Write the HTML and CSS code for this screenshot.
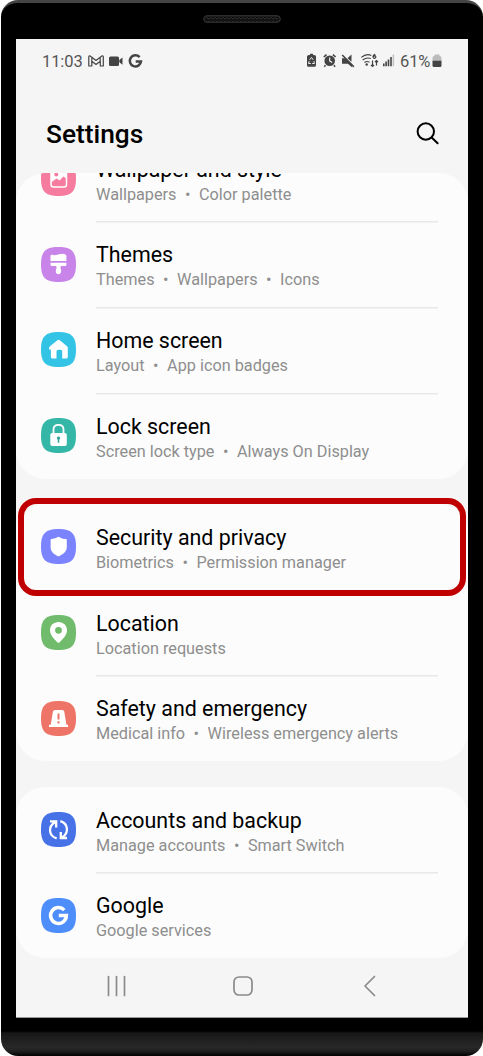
FILE: index.html
```
<!DOCTYPE html>
<html lang="en">
<head>
<meta charset="utf-8">
<title>Settings</title>
<link rel="stylesheet" href="styles.css">
</head>
<body>
<svg class="defs" width="0" height="0"><defs>
  <path id="squircle" d="M17.5 0C30.5 0 35 4.5 35 17.5S30.5 35 17.5 35 0 30.5 0 17.5 4.500 0 17.500 0Z"/>
  <pattern id="mesh" width="4" height="5" patternUnits="userSpaceOnUse"><circle cx="2" cy="2.500" r="1.300" fill="#000" stroke="#444" stroke-width=".6"/></pattern>
</defs></svg>
<div class="phone">
  <div class="bezel">
    <svg class="speaker" viewBox="0 0 78 8"><rect x=".7" y=".7" width="76.600" height="6.600" rx="3.300" fill="#111" stroke="#383838"/><rect x="3" y="1.500" width="72" height="5" fill="url(#mesh)"/></svg>
  </div>
  <main class="screen">
    <div class="status">
      <span class="time">11:03</span>
      <svg class="notif" viewBox="0 0 56 16" fill="#444">
        <path d="M2.200 3 8 7.400 13.800 3c.8-.5 1.500 0 1.500.9V13h-3V8.300L8 11.500 3.800 8.300V13H.8V3.900C.8 3 1.500 2.500 2.200 3ZM3.800 8.300V5M12.200 8.300V5" fill="none" stroke="#444" stroke-width="1.200" stroke-linejoin="round"/>
        <rect x="21" y="3.500" width="10" height="9.500" rx="1.500"/><path d="M31.300 7 34.500 4.500v7.300L31.300 9.300Z"/>
        <path d="M51.600 4.100A5.600 5.600 0 1 0 53 8.400H47.700" fill="none" stroke="#444" stroke-width="2.500"/>
      </svg>
      <svg class="system" viewBox="0 0 90 16" fill="#444">
        <path d="M3 2h1V.8h3V2h1q2 0 2 1.500v8.700q0 1.500-1.500 1.500h-6Q1 13.700 1 12.200V3.500Q1 2 3 2Z"/>
        <path d="m3.600 6.800 1.900-2.400 1.700 2.400M7.900 8.200l.5 2.300H6.200M4.800 10.500H2.500L3.200 8.200" fill="none" stroke="#eee" stroke-width="1"/>
        <circle cx="23.700" cy="7.800" r="5.300"/><path d="m17.800 4 2.700-2.400M29.600 4l-2.700-2.400M19.500 12.300l-1.200 1.400M27.900 12.300l1.200 1.400" fill="none" stroke="#444" stroke-width="1.600"/><path d="M23.700 4.600V8l2.500 1.500" fill="none" stroke="#fff" stroke-width="1.100"/>
        <path d="M36 5.300h3.700l6.600 6.600v2.600l-4.400-3.700H36ZM41.500 5.300 45.500 1.500v7.300Z"/><path d="m36.200 2 11.700 11.700" stroke="#444" stroke-width="1.600"/>
        <g fill="none" stroke="#444" stroke-width="1.200"><path d="M55.300 4.400Q60.500 0 65.300 2.500M56.700 7q3.800-3 8.100-1.500M58.500 9.400q2.300-1.700 5-.2"/><path d="M69.300 1.200q-2.600.8-2.300 3.100 1.200 1.900 2.600.4c.8-2-1.200-2.600-2.500-.8"/><path d="M66.500 7.500v6M64.900 11.900l1.600 1.600 1.600-1.600M70.500 12.500v-5M69 9l1.500-1.500L72 9"/></g>
        <circle cx="60.700" cy="11.500" r="1.200"/>
        <path d="M77 10.500h1.600v2.700H77zM79.300 8.500h1.600v4.700h-1.600zM81.700 6.500h1.600v6.700h-1.600z"/><path d="M84.200 4h1.600v9.200h-1.600z"/><path d="M86.600 1.500h1.500v11.700h-1.500z" fill="#c2c2c2"/>
      </svg>
      <span class="percent">61%</span>
      <svg class="battery" viewBox="0 0 10 14"><path d="M2.500 2V.5h5V2Q9.500 2 9.500 4v3h-9V4q0-2 2-2Z" fill="#bbb"/><path d="M.5 6.800h9v4.700q0 1.500-1.500 1.500H2Q.5 13 .5 11.500Z" fill="#444"/></svg>
    </div>
    <header class="header">
      <h1 class="heading">Settings</h1>
      <svg class="search" viewBox="0 0 24 24" fill="none" stroke="#000" stroke-width="2" stroke-linecap="round"><circle cx="9.800" cy="9.500" r="8.200"/><path d="m15.900 15.700 5.700 5.600"/></svg>
    </header>
    <div class="list">
      <section class="card first">
        <article class="row">
          <svg class="icon" viewBox="0 0 35 35"><use href="#squircle" fill="#f67c9f"/><path d="M10 8h15.500v9.500l-3.200-2-3.700 4-3-2-5.600 4Z" fill="#fff"/><rect x="10" y="7.500" width="15.500" height="18.500" rx="2.500" fill="none" stroke="#fff" stroke-width="1.500"/><circle cx="15.300" cy="13.500" r="2" fill="#f67c9f"/></svg>
          <div class="text"><h2 class="title">Wallpaper and style</h2><p class="sub">Wallpapers<span class="dot">•</span>Color palette</p></div>
        </article>
        <article class="row">
          <svg class="icon" viewBox="0 0 35 35"><use href="#squircle" fill="#c884e9"/><path d="M9.500 9q0-1.600 1.500-1.200 3 .9 6-.2 4.500-1.700 7.400-.2 1 .5 1 1.600v4.900H9.500ZM9.500 15.700h15.900v2q0 1.400-1.400 1.400h-3.500q-1 0-1 1v1.300q.7.700.7 2.900c0 4-5.400 4-5.400 0q0-2.200.7-2.900v-1.300q0-1-1-1H11q-1.500 0-1.500-1.400Z" fill="#fff"/></svg>
          <div class="text"><h2 class="title">Themes</h2><p class="sub">Themes<span class="dot">•</span>Wallpapers<span class="dot">•</span>Icons</p></div>
        </article>
        <article class="row">
          <svg class="icon" viewBox="0 0 35 35"><use href="#squircle" fill="#32c3e5"/><path d="M16.400 8.200q1.200-1 2.400 0l7.200 6q.8.700.8 1.800v9q0 1.600-1.600 1.600h-4v-7.200q0-1.700-1.700-1.700h-2.300q-1.700 0-1.700 1.700v7.200h-4q-1.600 0-1.600-1.600v-7.500H8v-1.300q0-1.200 1-2Z" fill="#fff"/></svg>
          <div class="text"><h2 class="title">Home screen</h2><p class="sub">Layout<span class="dot">•</span>App icon badges</p></div>
        </article>
        <article class="row">
          <svg class="icon" viewBox="0 0 35 35"><use href="#squircle" fill="#35b7a7"/><path d="M12.500 16v-4.500q0-4.600 5-4.600t5 4.600V16" fill="none" stroke="#fff" stroke-width="1.800"/><rect x="9.300" y="15" width="16.500" height="13" rx="2" fill="#fff"/><path d="M17.500 18.500a1.700 1.700 0 0 1 .8 3.200v3.100h-1.600v-3.100a1.700 1.700 0 0 1 .8-3.200Z" fill="#35a99a"/></svg>
          <div class="text"><h2 class="title">Lock screen</h2><p class="sub">Screen lock type<span class="dot">•</span>Always On Display</p></div>
        </article>
      </section>
      <section class="card">
        <article class="row">
          <svg class="icon" viewBox="0 0 35 35"><use href="#squircle" fill="#7c83ff"/><path d="M16.400 8.200q1.100-.7 2.200 0 2.900 1.800 6.400 1.900.8 0 .8.900v7.200c0 4.500-4.100 7-7.200 8.700q-1.100.6-2.200 0c-3.100-1.700-6.800-4.200-6.800-8.700V11q0-.8.800-.9 3-.2 6-1.900Z" fill="#fff"/></svg>
          <div class="text"><h2 class="title">Security and privacy</h2><p class="sub">Biometrics<span class="dot">•</span>Permission manager</p></div>
        </article>
        <article class="row">
          <svg class="icon" viewBox="0 0 35 35"><use href="#squircle" fill="#70bb6c"/><path fill-rule="evenodd" d="M17.500 7C12.500 7 9 10.600 9 15.200c0 5 4.300 8.700 7.300 12q1.200 1.300 2.400 0c3-3.300 7.300-7 7.300-12C26 10.600 22.500 7 17.500 7Zm0 4.900a3.400 3.400 0 1 1 0 6.800 3.400 3.400 0 0 1 0-6.800Z" fill="#fff"/></svg>
          <div class="text"><h2 class="title">Location</h2><p class="sub">Location requests</p></div>
        </article>
        <article class="row">
          <svg class="icon" viewBox="0 0 35 35"><use href="#squircle" fill="#ef7468"/><path d="M14 9h7.200q1.800 0 2.100 1.800l2.100 13h1.700v2.300H8v-2.300h1.700l2.200-13Q12.200 9 14 9Z" fill="#fff"/><path d="M17.500 12.500v6M17.500 20.300v2.300" stroke="#ef7468" stroke-width="2"/></svg>
          <div class="text"><h2 class="title">Safety and emergency</h2><p class="sub">Medical info<span class="dot">•</span>Wireless emergency alerts</p></div>
        </article>
      </section>
      <section class="card">
        <article class="row">
          <svg class="icon" viewBox="0 0 35 35"><use href="#squircle" fill="#4772e7"/><path d="M15.700 26.400C7.500 24 6.800 14.500 14 10.200M9 9.400h6.200v6M19.300 9.200c8.200 2.400 8.900 11.900 1.700 16.200M26 26h-6.200v-6" fill="none" stroke="#fff" stroke-width="2.300"/></svg>
          <div class="text"><h2 class="title">Accounts and backup</h2><p class="sub">Manage accounts<span class="dot">•</span>Smart Switch</p></div>
        </article>
        <article class="row">
          <svg class="icon" viewBox="0 0 35 35"><use href="#squircle" fill="#4d8efa"/><path d="M23.300 12.100A7.900 7.900 0 1 0 25.400 17.500H17.800" fill="none" stroke="#fff" stroke-width="3.500"/></svg>
          <div class="text"><h2 class="title">Google</h2><p class="sub">Google services</p></div>
        </article>
      </section>
      <div class="highlight"></div>
    </div>
    <nav class="nav">
      <svg viewBox="0 0 22 22"><path d="M2.500 1.500v19M10.500 1.500v19M18.500 1.500v19"/></svg>
      <svg viewBox="0 0 22 22"><rect x="2" y="2" width="18" height="18" rx="5"/></svg>
      <svg viewBox="0 0 22 22"><path d="m16.500 1.500-9.500 9.500 9.500 9.500"/></svg>
    </nav>
  </main>
</div>
</body>
</html>
```
FILE: styles.css
```
* { box-sizing: border-box; }
body { margin: 0; background: #fff; font-family: Roboto, "Liberation Sans", sans-serif; }
.defs { display: block; }
.phone {
  width: 482px; height: 1056px; margin-left: 1px; padding: 0 15px;
  border-radius: 17px; border-top: 3px solid #444;
  background: linear-gradient(#000 0, #000 1028px, #171717 1030px, #282828 1044px, #202020 1048px, #000 1053px);
}
.bezel { height: 36px; padding-top: 12px; display: flex; justify-content: center; }
.speaker { width: 78px; height: 8px; margin-right: 1px; }
.screen { width: 452px; height: 979px; background: #f5f5f5; border-bottom: 1px solid #999; overflow: hidden; }
.status { display: flex; height: 44px; padding-left: 26px; align-items: center; color: #555; font-size: 16.500px; white-space: nowrap; }
.time { width: 41px; letter-spacing: -.1px; }
.notif { width: 56px; height: 16px; margin-left: 5px; }
.system { width: 90px; height: 16px; margin-left: 162px; }
.percent { width: 31px; margin-left: 4px; letter-spacing: -.1px; }
.battery { width: 10px; height: 14px; margin-left: 1px; }
.header { height: 90px; display: flex; align-items: center; justify-content: space-between; padding: 12px 28px 0 30px; }
.heading { margin: 0; font-size: 26.300px; font-weight: 500; line-height: 32px; color: #000; }
.search { width: 24px; height: 24px; }
.list { position: relative; height: 785px; display: flex; flex-direction: column; gap: 25.500px; }
.card { border-radius: 29px; background: #fcfcfc; flex: none; overflow: hidden; }
.first { height: 305.500px; display: flex; flex-direction: column; justify-content: flex-end; }
.row { height: 85.700px; flex: none; display: flex; align-items: center; padding: 0 30px 0 25px; }
.icon { width: 35px; height: 35px; margin-right: 20px; flex: none; }
.text { height: 100%; flex: 1; padding-top: 20px; }
.row + .row .text { box-shadow: inset 0 1.500px #e8e8e8; }
.title { margin: 0; font-size: 21.400px; line-height: 27px; font-weight: 400; color: #000; white-space: nowrap; }
.sub { margin: 0; font-size: 16.250px; line-height: 23px; color: #8e8e8e; white-space: nowrap; }
.dot { display: inline-block; width: 22.500px; text-align: center; }
.highlight { position: absolute; left: 2px; top: 325px; width: 448px; height: 98px; border: 6px solid #c00000; border-radius: 18px; }
.nav { height: 56px; display: flex; align-items: center; justify-content: space-between; padding: 0 88px 0 90px; }
.nav svg { width: 22px; height: 22px; fill: none; stroke: #8b8b8b; stroke-width: 1.700; stroke-linecap: round; stroke-linejoin: round; }
```
